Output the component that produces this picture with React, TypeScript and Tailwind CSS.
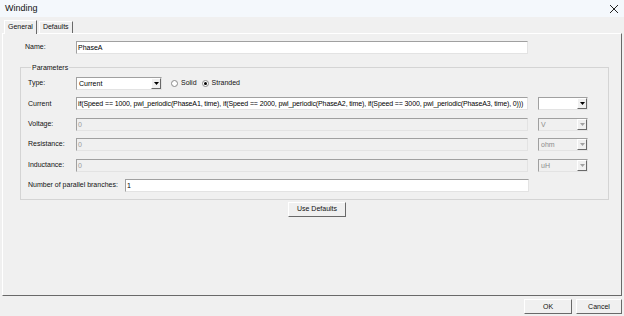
import React from 'react';

const sunken = 'border border-t-[#a0a0a0] border-l-[#a0a0a0] border-r-[#e3e3e3] border-b-[#e3e3e3]';
const raised = 'border border-t-[#ffffff] border-l-[#ffffff] border-r-[#696969] border-b-[#696969]';

const currentExpr =
  'if(Speed == 1000, pwl_periodic(PhaseA1, time), if(Speed == 2000, pwl_periodic(PhaseA2, time), if(Speed == 3000, pwl_periodic(PhaseA3, time), 0)))';

function Arrow({ disabled }: { disabled?: boolean }) {
  return (
    <span className={`flex h-full w-[10px] items-center justify-center bg-[#f0f0f0] ${raised}`}>
      <svg width="5" height="3" viewBox="0 0 5 3">
        <path d="M0 0h5L2.5 3z" fill={disabled ? '#a0a0a0' : '#000'} />
      </svg>
    </span>
  );
}

function Dropdown({ value, className, disabled }: { value: string; className: string; disabled?: boolean }) {
  return (
    <div className={`flex h-[13px] ${sunken} ${disabled ? 'bg-[#f0f0f0] text-[#8c8c8c]' : 'bg-white text-black'} ${className}`}>
      <span className="flex-1 truncate pl-[2px] leading-[11px]">{value}</span>
      <Arrow disabled={disabled} />
    </div>
  );
}

function TextBox({ value, className, disabled }: { value: string; className: string; disabled?: boolean }) {
  return (
    <div className={`h-[13px] ${sunken} ${disabled ? 'bg-[#f0f0f0] text-[#9a9a9a]' : 'bg-white text-black'} ${className}`}>
      <span className="block overflow-hidden whitespace-nowrap pl-[1px] leading-[11px]">{value}</span>
    </div>
  );
}

function Radio({ checked, label }: { checked?: boolean; label: string }) {
  return (
    <span className="flex items-center gap-[3px]">
      <span className="flex h-[7px] w-[7px] items-center justify-center rounded-full border border-[#8a8a8a] bg-white">
        {checked && <span className="h-[3px] w-[3px] rounded-full bg-black" />}
      </span>
      <span>{label}</span>
    </span>
  );
}

function ParamRow({ label, children }: { label: string; children: React.ReactNode }) {
  return (
    <div className="flex h-[13px] items-center">
      <span className="w-[48px] shrink-0">{label}</span>
      {children}
    </div>
  );
}

export default function App() {
  return (
    <div className="flex h-[316px] w-[624px] flex-col bg-[#f0f0f0] font-['Liberation_Sans',Arial,sans-serif] text-[7px] text-[#111]">
      <div className="flex h-[17px] items-center justify-between bg-[#f4f8fc] pl-[5px] pr-[2px]">
        <span className="text-[9px]">Winding</span>
        <svg width="16" height="14" viewBox="0 0 16 14">
          <path d="M4 3l8 8M12 3l-8 8" stroke="#222" strokeWidth="1" />
        </svg>
      </div>

      <div className="ml-[4px] mt-[2px] flex h-[14px] items-end">
        <div className="relative z-10 -mb-px flex h-[14px] items-center border-l border-r border-t border-l-white border-r-[#696969] border-t-white bg-[#f0f0f0] px-[3px] pb-[1px]">
          General
        </div>
        <div className="ml-[2px] flex h-[12px] items-center border-l border-r border-t border-l-white border-r-[#696969] border-t-white px-[3px]">
          Defaults
        </div>
      </div>

      <div className="mx-[2px] flex h-[263px] flex-col border border-b-[#696969] border-l-white border-r-[#696969] border-t-white pl-[17px] pr-[13px] pt-[7px]">
        <div className="flex h-[13px] items-center">
          <span className="w-[56px] shrink-0 pl-[5px]">Name:</span>
          <TextBox value="PhaseA" className="w-[452px]" />
        </div>

        <fieldset className="mt-[9px] flex w-[589px] flex-col gap-[7.4px] border border-[#d4d4d4] pb-[7px] pl-[7px] pr-[19px] pt-[5px]">
          <legend className="ml-[3px] px-[1px] leading-[9px]">Parameters</legend>
          <ParamRow label="Type:">
            <Dropdown value="Current" className="w-[86px]" />
            <span className="ml-[9px] flex gap-[5px]">
              <Radio label="Solid" />
              <Radio checked label="Stranded" />
            </span>
          </ParamRow>
          <ParamRow label="Current">
            <TextBox value={currentExpr} className="w-[452px] tracking-[-0.12px]" />
            <Dropdown value="" className="ml-[10px] w-[50px]" />
          </ParamRow>
          <ParamRow label="Voltage:">
            <TextBox value="0" disabled className="w-[452px]" />
            <Dropdown value="V" disabled className="ml-[10px] w-[50px]" />
          </ParamRow>
          <ParamRow label="Resistance:">
            <TextBox value="0" disabled className="w-[452px]" />
            <Dropdown value="ohm" disabled className="ml-[10px] w-[50px]" />
          </ParamRow>
          <ParamRow label="Inductance:">
            <TextBox value="0" disabled className="w-[452px]" />
            <Dropdown value="uH" disabled className="ml-[10px] w-[50px]" />
          </ParamRow>
          <div className="flex h-[13px] items-center">
            <span className="w-[97px] shrink-0">Number of parallel branches:</span>
            <TextBox value="1" className="w-[404px]" />
          </div>
        </fieldset>

        <div className="mt-[2px] flex pl-[268px]">
          <button className={`h-[15px] w-[58px] bg-[#f0f0f0] leading-[12px] ${raised}`}>Use Defaults</button>
        </div>
      </div>

      <div className="mt-[3px] flex justify-end gap-[4px] pr-[2px]">
        <button className={`h-[15px] w-[48px] bg-[#f0f0f0] leading-[12px] ${raised}`}>OK</button>
        <button className={`h-[15px] w-[46px] bg-[#f0f0f0] leading-[12px] ${raised}`}>Cancel</button>
      </div>
    </div>
  );
}
